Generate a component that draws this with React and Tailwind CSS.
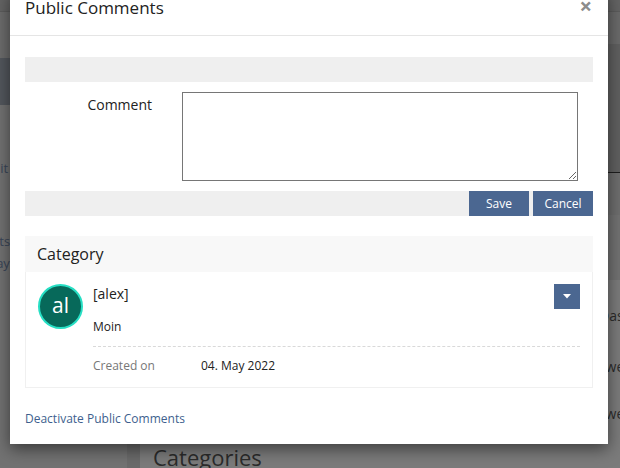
import React from 'react';

function Backdrop() {
  return (
    <div className="absolute inset-0 flex flex-col">
      <div className="h-[12px] bg-[#646464] border-b border-[#5c5c5c]" />
      <div className="flex flex-1">
        {/* sidebar */}
        <aside className="w-[127px] bg-[#727272] flex flex-col text-[13px] text-[#3a4658]">
          <div className="h-[46px] bg-[#6c6c6c]" />
          <div className="h-[47px] bg-[#53575d]" />
          <div className="-ml-[15px] pt-[53px] flex flex-col leading-[20px]">
            <span>Edit</span>
            <span className="mt-[53px] -ml-[7px]">Texts</span>
            <span className="mt-[2px] -ml-[19px]">Display</span>
          </div>
        </aside>
        {/* main area */}
        <main className="flex-1 flex flex-col bg-[#6a6a6a]">
          <div className="h-[32px] bg-[#6a6a6a]" />
          <div className="h-[129px] bg-[#606060] border-b border-[#1e1e1e]" />
          <div className="flex flex-1">
            <div className="w-[13px] bg-[#6a6a6a]" />
            <div className="flex-1 flex flex-col bg-[#7b7b7b]">
              <div className="h-[42px] bg-[#6e6e6e]" />
              <div className="h-[65px] bg-[#727272]" />
              <div className="flex-1 flex">
                <div className="flex-1 flex flex-col justify-end pl-[13px] -mb-[2px]">
                  <h2 className="text-[22px] leading-[26px] text-[#2b2b2b]">Categories</h2>
                </div>
                <div className="w-[21px] overflow-hidden whitespace-nowrap text-[14px] leading-[20px] text-[#2b2b2b] pt-[26px] flex flex-col">
                  <span>Das</span>
                  <span className="mt-[31px]">zwei</span>
                  <span className="mt-[27px]">zwei</span>
                </div>
              </div>
            </div>
          </div>
        </main>
      </div>
    </div>
  );
}

function Avatar() {
  return (
    <div className="w-[45px] h-[45px] shrink-0 rounded-full border-2 border-[#27dfc4] bg-[#07695a] flex items-center justify-center">
      <span className="text-white text-[21px] leading-none -mt-[2px]">al</span>
    </div>
  );
}

function CommentItem() {
  return (
    <div className="border border-t-0 border-[#f0f0f0] px-[12px] pt-[12px] pb-[12px] flex gap-[10px]">
      <Avatar />
      <div className="flex-1">
        <div className="flex justify-between items-start">
          <div className="text-[14px] leading-[20px] text-[#222]">[alex]</div>
          <button className="w-[26px] h-[25px] bg-[#4b6791] flex items-center justify-center">
            <svg width="8" height="5" viewBox="0 0 8 5">
              <path d="M0 0h8L4 4.5z" fill="#fff" />
            </svg>
          </button>
        </div>
        <div className="mt-[9px] text-[12px] leading-[18px] text-[#222]">Moin</div>
        <div className="mt-[10px] border-t border-dashed border-[#d9d9d9]" />
        <div className="mt-[10px] flex text-[12px] leading-[18px]">
          <span className="w-[108px] text-[#777]">Created on</span>
          <span className="text-[#222]">04. May 2022</span>
        </div>
      </div>
    </div>
  );
}

export default function App() {
  return (
    <div className="relative w-[620px] h-[468px] overflow-hidden bg-[#737373] font-['Open_Sans',sans-serif]">
      <Backdrop />

      {/* modal dialog */}
      <div className="absolute left-[10px] top-[-10px] w-[598px] bg-white shadow-[0_5px_15px_rgba(0,0,0,0.5)]">
        <div className="h-[46px] border-b border-[#e5e5e5] pl-[15px] pr-[16px] pt-[8px] flex justify-between items-start">
          <h4 className="text-[17px] leading-[20px] text-[#222]">Public Comments</h4>
          <button className="text-[22px] leading-[20px] font-bold text-[#8c8c8c] -mt-[3px]">×</button>
        </div>

        <div className="px-[15px] pt-[21px] pb-[16px]">
          <div className="h-[25px] bg-[#efefef]" />

          <div className="mt-[10px] flex items-start gap-[30px]">
            <label className="w-[127px] text-right text-[14px] leading-[20px] text-[#222] pt-[3px]">Comment</label>
            <textarea className="w-[396px] h-[89px] border border-[#767676] resize-y bg-white outline-none" />
          </div>

          <div className="mt-[10px] h-[25px] bg-[#efefef] flex justify-end gap-[4px]">
            <button className="w-[60px] h-[25px] bg-[#4b6791] text-white text-[12px]">Save</button>
            <button className="w-[60px] h-[25px] bg-[#4b6791] text-white text-[12px]">Cancel</button>
          </div>

          <div className="mt-[20px]">
            <div className="h-[36px] bg-[#f8f8f8] px-[12px] flex items-center">
              <span className="text-[16px] text-[#222]">Category</span>
            </div>
            <CommentItem />
          </div>

          <a href="#" className="block mt-[22px] text-[12px] leading-[18px] text-[#3e5f8e]">Deactivate Public Comments</a>
        </div>
      </div>
    </div>
  );
}
